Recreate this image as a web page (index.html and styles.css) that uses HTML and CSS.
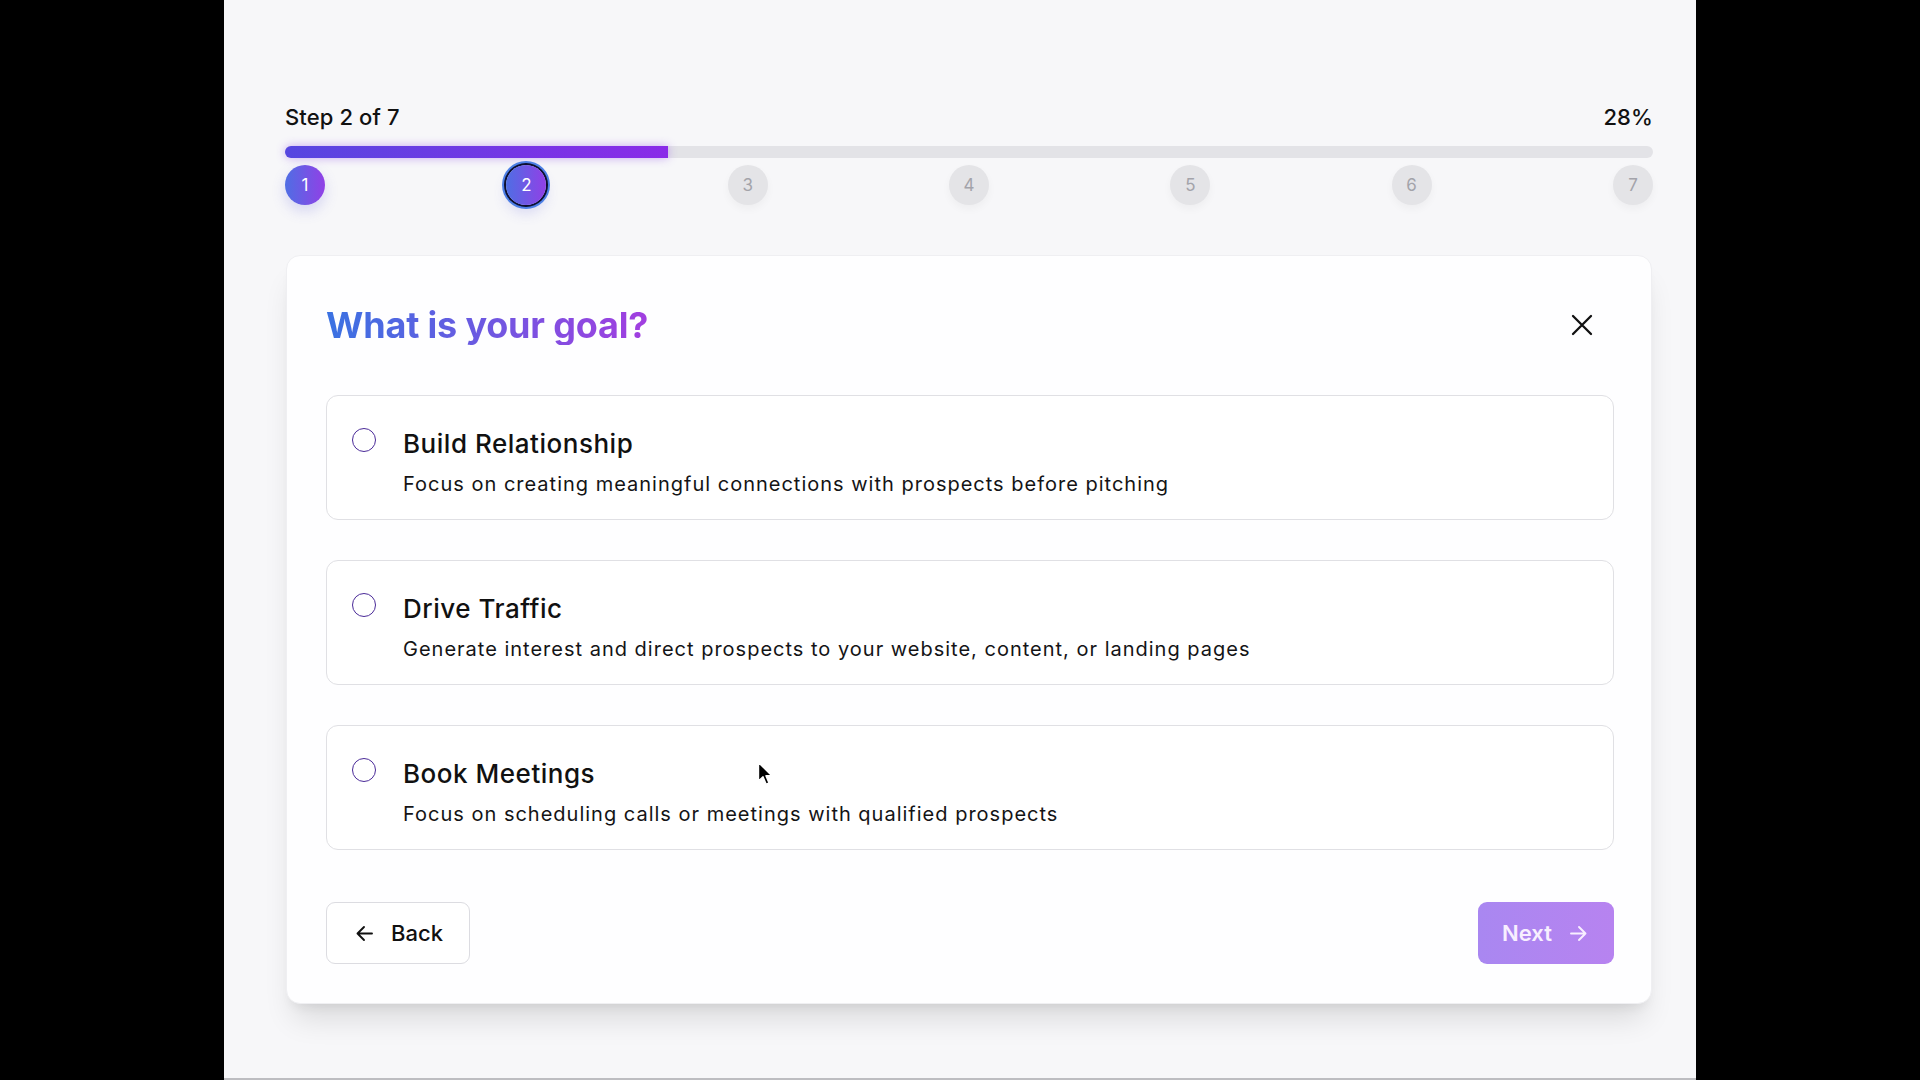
FILE: index.html
```html
<!DOCTYPE html>
<html lang="en">
<head>
<meta charset="utf-8">
<title>What is your goal?</title>
<link rel="stylesheet" href="styles.css">
</head>
<body>
<div class="screen">
  <main class="page">
    <div class="progress-head">
      <span>Step 2 of 7</span>
      <span>28%</span>
    </div>
    <div class="bar"><div class="fill" style="width:28%"></div></div>
    <div class="steps">
      <div class="step done">1</div>
      <div class="step current">2</div>
      <div class="step">3</div>
      <div class="step">4</div>
      <div class="step">5</div>
      <div class="step">6</div>
      <div class="step">7</div>
    </div>

    <section class="card">
      <div class="card-head">
        <h1 class="title">What is your goal?</h1>
        <button class="close" aria-label="Close">
          <svg width="24" height="24" viewBox="0 0 24 24" fill="none" stroke="#111" stroke-width="2.3" stroke-linecap="round"><path d="M3 3 21 21M21 3 3 21"/></svg>
        </button>
      </div>

      <div class="options">
        <label class="option">
          <span class="radio"></span>
          <span class="option-text">
            <span class="option-title">Build Relationship</span>
            <span class="option-desc">Focus on creating meaningful connections with prospects before pitching</span>
          </span>
        </label>
        <label class="option">
          <span class="radio"></span>
          <span class="option-text">
            <span class="option-title">Drive Traffic</span>
            <span class="option-desc">Generate interest and direct prospects to your website, content, or landing pages</span>
          </span>
        </label>
        <label class="option">
          <span class="radio"></span>
          <span class="option-text">
            <span class="option-title">Book Meetings</span>
            <span class="option-desc">Focus on scheduling calls or meetings with qualified prospects</span>
          </span>
        </label>
      </div>

      <div class="actions">
        <button class="btn back">
          <svg width="17" height="17" viewBox="0 0 17 17" fill="none" stroke="#111" stroke-width="1.9" stroke-linecap="round" stroke-linejoin="round"><path d="M16 8.5H1.5M8 2 1.5 8.5 8 15"/></svg>
          <span>Back</span>
        </button>
        <button class="btn next">
          <span>Next</span>
          <svg width="17" height="17" viewBox="0 0 17 17" fill="none" stroke="currentColor" stroke-width="1.9" stroke-linecap="round" stroke-linejoin="round"><path d="M1 8.5H15.5M9 2 15.5 8.5 9 15"/></svg>
        </button>
      </div>
    </section>
  </main>
  <svg class="cursor" width="17" height="26" viewBox="0 0 17 26"><path d="M1.5 1.5V20L6 15.8 9.2 23.2 12 22 8.9 14.8H14.8Z" fill="#000" stroke="#fff" stroke-width="1.4" stroke-linejoin="round"/></svg>
</div>
</body>
</html>
```

FILE: styles.css
```css
* { box-sizing: border-box; }

html, body {
  margin: 0;
  padding: 0;
  background: #000;
}

body {
  font-family: Inter, "Noto Sans", "Liberation Sans", sans-serif;
  color: #111114;
}

.screen {
  position: relative;
  width: 1472px;
  height: 1080px;
  margin-left: 224px;
}

.page {
  height: 1080px;
  background: #f7f7f9;
  border-bottom: 2px solid #bdbdc1;
  padding: 103px 43px 0 61px;
}

.progress-head {
  display: flex;
  justify-content: space-between;
  align-items: center;
  font-size: 22px;
  font-weight: 500;
  line-height: 28px;
  letter-spacing: 0.005em;
  color: #111;
  margin-bottom: 15px;
}

.bar {
  height: 12px;
  border-radius: 6px;
  background: #e3e3e7;
}

.fill {
  height: 100%;
  border-radius: 6px 0 0 6px;
  background: linear-gradient(90deg, #5646e0, #8a2be8);
  box-shadow: 0 0 10px rgba(140, 70, 235, 0.45);
}

.steps {
  display: flex;
  justify-content: space-between;
  margin-top: 7px;
}

.step {
  width: 40px;
  height: 40px;
  border-radius: 50%;
  display: flex;
  align-items: center;
  justify-content: center;
  font-size: 17px;
  background: #e4e4e7;
  color: #a3a3aa;
  box-shadow: 0 4px 8px rgba(0, 0, 0, 0.04);
}

.step.done,
.step.current {
  background: linear-gradient(90deg, #4f6ee4, #9140e6);
  color: #fff;
  box-shadow: 0 6px 14px rgba(90, 90, 220, 0.22);
}

.step.current {
  box-shadow: 0 0 0 2px #0e1030, 0 0 0 4px #4c7fe6, 0 8px 14px rgba(90, 90, 220, 0.2);
}

.card {
  margin: 50px 1px 0;
  background: #fefeff;
  border: 1px solid #efeff2;
  border-radius: 14px;
  padding: 49px 37px 39px 39px;
  box-shadow: 0 22px 30px -8px rgba(0, 0, 0, 0.12), 0 8px 12px -6px rgba(0, 0, 0, 0.08);
}

.card-head {
  display: flex;
  justify-content: space-between;
  align-items: center;
  height: 40px;
}

.title {
  margin: 0;
  font-size: 36px;
  line-height: 40px;
  font-weight: 700;
  letter-spacing: -0.005em;
  background: linear-gradient(90deg, #3a72e2, #a23ee0);
  -webkit-background-clip: text;
  background-clip: text;
  color: transparent;
  width: max-content;
}

.close {
  border: 0;
  background: none;
  padding: 0;
  margin-right: 20px;
  width: 24px;
  height: 24px;
  display: flex;
  cursor: pointer;
}

.options {
  display: flex;
  flex-direction: column;
  gap: 40px;
  margin-top: 50px;
}

.option {
  display: flex;
  align-items: flex-start;
  height: 125px;
  background: #fff;
  border: 1px solid #e0e0e4;
  border-radius: 12px;
  padding: 32px 24px 20px 25px;
  cursor: pointer;
}

.radio {
  flex: none;
  width: 24px;
  height: 24px;
  border-radius: 50%;
  border: 1.8px solid #4a2a98;
  background: #fff;
  margin-right: 27px;
}

.option-text {
  display: flex;
  flex-direction: column;
}

.option-title {
  font-size: 26px;
  line-height: 32px;
  font-weight: 500;
  letter-spacing: 0.02em;
  color: #111;
}

.option-desc {
  margin-top: 10px;
  font-size: 20px;
  line-height: 28px;
  font-weight: 400;
  letter-spacing: 0.05em;
  color: #141416;
}

.actions {
  display: flex;
  justify-content: space-between;
  margin-top: 52px;
}

.btn {
  display: flex;
  align-items: center;
  gap: 18px;
  height: 62px;
  border-radius: 9px;
  font-family: inherit;
  font-size: 22px;
  font-weight: 500;
  cursor: pointer;
}

.back {
  background: #fff;
  border: 1px solid #dcdce1;
  color: #111;
  padding: 0 26px 0 29px;
}

.next {
  border: 0;
  background: linear-gradient(90deg, #a987f1, #b783f0);
  color: #f8efff;
  font-weight: 600;
  padding: 0 27px 0 24px;
}

.cursor {
  position: absolute;
  left: 533px;
  top: 761px;
}
```
